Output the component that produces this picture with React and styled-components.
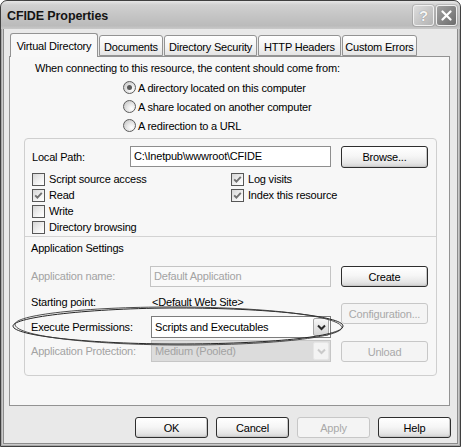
import React from 'react'
import styled, { createGlobalStyle } from 'styled-components'

const GlobalStyle = createGlobalStyle`
  html, body { margin: 0; padding: 0; background: #fff; }
  body {
    font-family: "Liberation Sans", Arial, sans-serif;
    font-size: 11px;
    letter-spacing: -0.2px;
    color: #000;
  }
  * { box-sizing: border-box; }
`

const Window = styled.div`
  position: relative;
  width: 461px;
  height: 447px;
  border: 1px solid #3f3f3f;
  border-radius: 7px 7px 0 0;
  background: #e9e9e9;
  box-shadow: inset 0 0 0 1px #a8a8a8, inset 0 0 0 2px #cacaca, inset 0 0 0 3px #8c8c8c;
  overflow: hidden;
`

const TitleBar = styled.div`
  height: 28px;
  display: flex;
  align-items: center;
  justify-content: space-between;
  padding: 0 3px 0 6px;
  border-radius: 6px 6px 0 0;
  background: linear-gradient(#e6e6e6 0%, #d0d0d0 14%, #c4c4c4 55%, #bbbbbb 88%, #c9c9c9 100%);
`

const Title = styled.div`
  font-size: 12.5px;
  font-weight: bold;
  letter-spacing: -0.1px;
  color: #141414;
  padding-top: 1px;
`

const CapButtons = styled.div`
  display: flex;
  gap: 2px;
`

const CapButton = styled.span`
  width: 21px;
  height: 21px;
  border-radius: 3px;
  border: 1px solid #f0f0f0;
  box-shadow: 0 0 0 1px rgba(0, 0, 0, 0.12);
  background: ${p => p.$close
    ? 'linear-gradient(135deg, #a2a2a2, #6c6c6c)'
    : 'linear-gradient(135deg, #dddddd, #b3b3b3)'};
  display: flex;
  align-items: center;
  justify-content: center;
  font-size: 15px;
  font-weight: bold;
  color: #f6f6f6;
  text-shadow: 0 0 1px #6a6a6a;
`

const Body = styled.div`
  padding: 4px 10px 0 8px;
`

const TabRow = styled.div`
  position: relative;
  z-index: 1;
  display: flex;
  align-items: flex-end;
  gap: 1px;
  height: 23px;
  padding-left: 1px;
`

const Tab = styled.div`
  width: ${p => p.$w}px;
  height: ${p => (p.$active ? 24 : 21)}px;
  margin-bottom: ${p => (p.$active ? -1 : 0)}px;
  padding-top: ${p => (p.$active ? 5 : 4)}px;
  line-height: 14px;
  text-align: center;
  white-space: nowrap;
  border: 1px solid #939393;
  border-bottom: ${p => (p.$active ? 'none' : '1px solid #939393')};
  border-radius: 3px 3px 0 0;
  background: ${p => (p.$active
    ? '#f8f8f8'
    : 'linear-gradient(#ffffff, #f2f2f2 60%, #e4e4e4)')};
`

const Panel = styled.div`
  height: 350px;
  border: 1px solid #939393;
  background: #f7f7f7;
`

const Prompt = styled.div`
  margin: 4px 0 0 25px;
  line-height: 14px;
`

const RadioList = styled.div`
  margin: 3px 0 0 113px;
  display: flex;
  flex-direction: column;
`

const Option = styled.div`
  height: 19px;
  display: flex;
  align-items: center;
  gap: 2px;
  line-height: 14px;
`

const RadioDot = styled.span`
  flex: none;
  width: 13px;
  height: 13px;
  border-radius: 50%;
  border: 1px solid #5c5c5c;
  background: radial-gradient(circle at 68% 68%, #ffffff 0%, #e8e8e8 40%, #bdbdbd 100%);
  display: inline-flex;
  align-items: center;
  justify-content: center;

  &::after {
    content: '';
    width: 5px;
    height: 5px;
    border-radius: 50%;
    background: ${p => (p.$on ? '#5a5a5a' : 'transparent')};
  }
`

const GroupBox = styled.div`
  width: 413px;
  height: 238px;
  margin: 3px 0 0 14px;
  border: 1px solid #cfcfcf;
  border-radius: 4px;
`

const PathRow = styled.div`
  margin-top: 7px;
  padding-left: 7px;
  height: 22px;
  display: flex;
  align-items: flex-start;
`

const PathLabel = styled.span`
  width: 98px;
  flex: none;
  line-height: 22px;
`

const TextBox = styled.div`
  width: ${p => p.$w || 181}px;
  height: 21px;
  flex: none;
  padding-left: 3px;
  line-height: 19px;
  white-space: nowrap;
  border: 1px solid ${p => (p.$disabled ? '#c4c4c4' : '#8e8e8e')};
  background: ${p => (p.$disabled ? '#f9f9f9' : '#ffffff')};
  color: ${p => (p.$disabled ? '#a3a3a3' : '#000')};
`

const Button = styled.div`
  width: ${p => p.$w || 87}px;
  height: ${p => p.$h || 21}px;
  flex: none;
  margin-left: ${p => p.$ml || 0}px;
  margin-top: ${p => p.$mt || 0}px;
  display: flex;
  align-items: center;
  justify-content: center;
  border-radius: 3px;
  border: 1px solid ${p => (p.$disabled ? '#c7c7c7' : '#2e2e2e')};
  background: ${p => (p.$disabled
    ? '#f4f4f4'
    : 'linear-gradient(#ffffff 0%, #f6f6f6 45%, #e6e6e6 80%, #d2d2d2 100%)')};
  color: ${p => (p.$disabled ? '#a9a9a9' : '#000')};
  box-shadow: ${p => (p.$disabled ? 'none' : 'inset -1px -1px 0 #c8c8c8')};
  white-space: nowrap;
`

const CheckGrid = styled.div`
  margin-top: 3px;
  padding-left: 7px;
  display: grid;
  grid-template-columns: 199px 150px;
  grid-auto-rows: 16px;
`

const CheckItem = styled.div`
  display: flex;
  align-items: center;
  gap: 4px;
  line-height: 14px;
`

const CheckBox = styled.span`
  flex: none;
  width: 13px;
  height: 13px;
  border: 1px solid #575757;
  background: linear-gradient(135deg, #d6d6d6 0%, #f2f2f2 60%, #ffffff 100%);
  display: inline-flex;
  align-items: center;
  justify-content: center;
`

const Separator = styled.div`
  margin-top: 1px;
  height: 1px;
  background: #d3d3d3;
`

const SectionTitle = styled.div`
  margin-top: 4px;
  padding-left: 6px;
  line-height: 14px;
`

const AppSection = styled.div`
  margin-top: 10px;
  padding-left: 6px;
  display: flex;
  gap: 10px;
`

const FieldCol = styled.div`
  width: 300px;
  flex: none;
  display: flex;
  flex-direction: column;
  gap: 2px;
`

const FieldRow = styled.div`
  height: ${p => p.$h || 22}px;
  display: flex;
  align-items: center;
`

const ButtonCol = styled.div`
  display: flex;
  flex-direction: column;
  padding-top: 1px;
`

const Label = styled.span`
  width: 119px;
  flex: none;
  white-space: nowrap;
  color: ${p => (p.$disabled ? '#a3a3a3' : '#000')};
`

const Value = styled.span`
  padding-left: 2px;
  white-space: nowrap;
`

const Select = styled.div`
  width: 180px;
  height: 22px;
  margin-left: 1px;
  flex: none;
  display: flex;
  align-items: stretch;
  border: 1px solid ${p => (p.$disabled ? '#c6c6c6' : '#7c7c7c')};
  background: ${p => (p.$disabled ? '#dcdcdc' : '#ffffff')};
  color: ${p => (p.$disabled ? '#a3a3a3' : '#000')};
`

const SelectText = styled.span`
  flex: 1;
  padding-left: 3px;
  line-height: 20px;
  white-space: nowrap;
`

const ArrowBtn = styled.span`
  width: 16px;
  margin: 1px;
  border-radius: 2px;
  border: 1px solid ${p => (p.$disabled ? '#e6e6e6' : '#a6a6a6')};
  background: ${p => (p.$disabled ? '#f3f3f3' : 'linear-gradient(#f7f7f7, #d5d5d5)')};
  display: flex;
  align-items: center;
  justify-content: center;
`

const ButtonBar = styled.div`
  margin: 11px -1px 0 0;
  display: flex;
  justify-content: flex-end;
  gap: 8px;
`

const Overlay = styled.svg`
  position: absolute;
  left: -1px;
  top: -1px;
  pointer-events: none;
`

const Check = () => (
  <svg width="9" height="9" viewBox="0 0 9 9">
    <polyline points="1.2,4.3 3.4,6.6 7.8,1.8" fill="none" stroke="#727272" strokeWidth="1.9" />
  </svg>
)

const Chevron = ({ color }) => (
  <svg width="9" height="7" viewBox="0 0 9 7">
    <polyline points="1,1.5 4.5,5 8,1.5" fill="none" stroke={color} strokeWidth="2" />
  </svg>
)

const Radio = ({ on, children }) => (
  <Option>
    <RadioDot $on={on} />
    <span>{children}</span>
  </Option>
)

const Checkbox = ({ checked, children }) => (
  <CheckItem>
    <CheckBox>{checked && <Check />}</CheckBox>
    <span>{children}</span>
  </CheckItem>
)

const tabs = [
  { label: 'Virtual Directory', w: 88, active: true },
  { label: 'Documents', w: 64 },
  { label: 'Directory Security', w: 93 },
  { label: 'HTTP Headers', w: 83 },
  { label: 'Custom Errors', w: 75 },
]

export default function App () {
  return (
    <Window>
      <GlobalStyle />
      <TitleBar>
        <Title>CFIDE Properties</Title>
        <CapButtons>
          <CapButton>?</CapButton>
          <CapButton $close>
            <svg width="11" height="11" viewBox="0 0 11 11">
              <path d="M1.5 1.5 L9.5 9.5 M9.5 1.5 L1.5 9.5" stroke="#fff" strokeWidth="2.2" strokeLinecap="round" />
            </svg>
          </CapButton>
        </CapButtons>
      </TitleBar>

      <Body>
        <TabRow>
          {tabs.map(t => (
            <Tab key={t.label} $w={t.w} $active={t.active}>{t.label}</Tab>
          ))}
        </TabRow>

        <Panel>
          <Prompt>When connecting to this resource, the content should come from:</Prompt>
          <RadioList>
            <Radio on>A directory located on this computer</Radio>
            <Radio>A share located on another computer</Radio>
            <Radio>A redirection to a URL</Radio>
          </RadioList>

          <GroupBox>
            <PathRow>
              <PathLabel>Local Path:</PathLabel>
              <TextBox $w={201}>C:\Inetpub\wwwroot\CFIDE</TextBox>
              <Button $ml={10} $h={22}>Browse...</Button>
            </PathRow>

            <CheckGrid>
              <Checkbox>Script source access</Checkbox>
              <Checkbox checked>Log visits</Checkbox>
              <Checkbox checked>Read</Checkbox>
              <Checkbox checked>Index this resource</Checkbox>
              <Checkbox>Write</Checkbox>
              <span />
              <Checkbox>Directory browsing</Checkbox>
            </CheckGrid>

            <Separator />
            <SectionTitle>Application Settings</SectionTitle>

            <AppSection>
              <FieldCol>
                <FieldRow>
                  <Label $disabled>Application name:</Label>
                  <TextBox $disabled>Default Application</TextBox>
                </FieldRow>
                <FieldRow $h={25}>
                  <Label>Starting point:</Label>
                  <Value>&lt;Default Web Site&gt;</Value>
                </FieldRow>
                <FieldRow>
                  <Label>Execute Permissions:</Label>
                  <Select>
                    <SelectText>Scripts and Executables</SelectText>
                    <ArrowBtn><Chevron color="#2a2a2a" /></ArrowBtn>
                  </Select>
                </FieldRow>
                <FieldRow>
                  <Label $disabled>Application Protection:</Label>
                  <Select $disabled>
                    <SelectText>Medium (Pooled)</SelectText>
                    <ArrowBtn $disabled><Chevron color="#cacaca" /></ArrowBtn>
                  </Select>
                </FieldRow>
              </FieldCol>
              <ButtonCol>
                <Button>Create</Button>
                <Button $disabled $mt={16}>Configuration...</Button>
                <Button $disabled $mt={17}>Unload</Button>
              </ButtonCol>
            </AppSection>
          </GroupBox>
        </Panel>

        <ButtonBar>
          <Button $w={73}>OK</Button>
          <Button $w={73}>Cancel</Button>
          <Button $w={73} $disabled>Apply</Button>
          <Button $w={73}>Help</Button>
        </ButtonBar>
      </Body>

      <Overlay width="461" height="447" viewBox="0 0 461 447">
        <path
          d="M13 326 C13 317 92 308 178 308 C266 308 343 316 343 326 C343 337 266 344 178 344 C92 344 13 336 13 326 Z"
          fill="none" stroke="#262626" strokeWidth="1"
        />
        <path
          d="M15 324 C17 314 94 306.5 180 307 C268 307.5 340 316 342 327.5 C341 338 264 345.5 176 345 C88 344.5 14 336 15 324"
          fill="none" stroke="#3a3a3a" strokeWidth="0.9"
        />
      </Overlay>
    </Window>
  )
}
